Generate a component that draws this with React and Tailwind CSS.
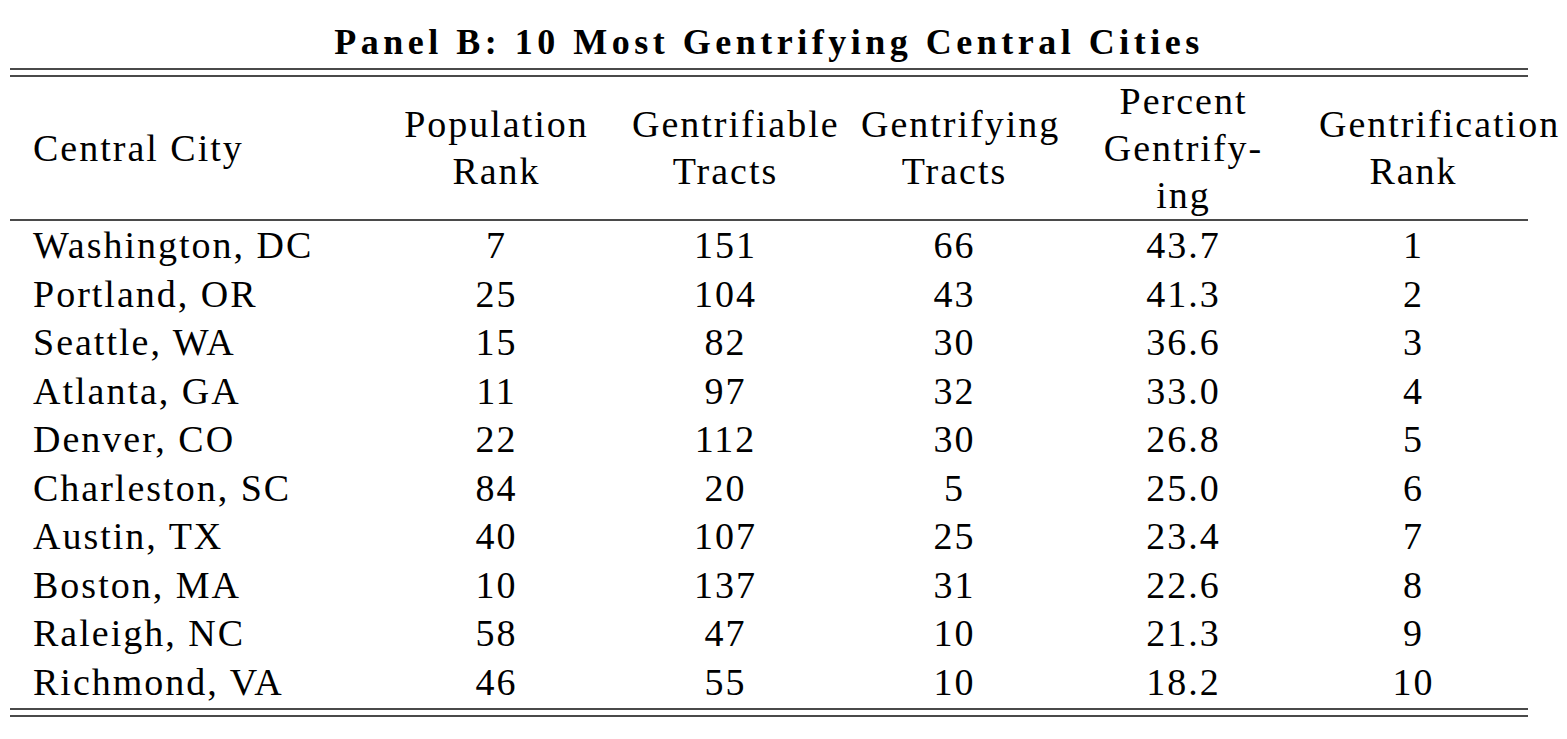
import React from 'react';

// Panel B table: most gentrifying central cities
const rows = [
  ['Washington, DC', '7', '151', '66', '43.7', '1'],
  ['Portland, OR', '25', '104', '43', '41.3', '2'],
  ['Seattle, WA', '15', '82', '30', '36.6', '3'],
  ['Atlanta, GA', '11', '97', '32', '33.0', '4'],
  ['Denver, CO', '22', '112', '30', '26.8', '5'],
  ['Charleston, SC', '84', '20', '5', '25.0', '6'],
  ['Austin, TX', '40', '107', '25', '23.4', '7'],
  ['Boston, MA', '10', '137', '31', '22.6', '8'],
  ['Raleigh, NC', '58', '47', '10', '21.3', '9'],
  ['Richmond, VA', '46', '55', '10', '18.2', '10'],
];

// each header is a list of lines; "left" marks words too long for the column
const headers = [
  [{ t: 'Population' }, { t: 'Rank' }],
  [{ t: 'Gentrifiable', left: true }, { t: 'Tracts' }],
  [{ t: 'Gentrifying', left: true }, { t: 'Tracts' }],
  [{ t: 'Percent' }, { t: 'Gentrify-' }, { t: 'ing' }],
  [{ t: 'Gentrification', left: true }, { t: 'Rank' }],
];

const cols = 'grid grid-cols-[372px_229px_229px_229px_229px_230px]';
const serif = "font-['Liberation_Serif'] text-[38px] tracking-[2px] text-black";

function Rule() {
  return <div className="h-[2px] bg-[#4a4a4a]" />;
}

export default function App() {
  return (
    <div className="w-[1567px] h-[739px] bg-white overflow-hidden">
      <div className="ml-[10px] w-[1518px]">
        {/* Title */}
        <div className="pt-[22px] h-[68px] text-center font-['Liberation_Serif'] text-[36px] leading-[40px] font-bold tracking-[4.5px] text-black">
          Panel B: 10 Most Gentrifying Central Cities
        </div>

        {/* top double rule */}
        <Rule />
        <div className="h-[5px]" />
        <Rule />

        {/* Header */}
        <div className={`${cols} h-[142px] items-center`}>
          <div className={`${serif} pl-[23px] whitespace-nowrap leading-[47px]`}>Central City</div>
          {headers.map((lines, i) => (
            <div
              key={i}
              className={i === 4 ? 'pl-[21px] pr-[20px]' : 'px-[21px]'}
            >
              {lines.map((l, j) => (
                <div
                  key={j}
                  className={
                    l.left
                      ? `${serif} leading-[47px] text-left whitespace-nowrap`
                      : `${serif} leading-[47px] text-center whitespace-nowrap`
                  }
                >
                  {l.t}
                </div>
              ))}
            </div>
          ))}
        </div>

        {/* mid rule */}
        <Rule />

        {/* Body */}
        <div>
          {rows.map((r, i) => (
            <div key={i} className={`${cols} h-[48.5px] items-center`}>
              <div className={`${serif} leading-[48.5px] pl-[23px] whitespace-nowrap`}>{r[0]}</div>
              {r.slice(1).map((v, j) => (
                <div
                  key={j}
                  className={
                    j === 4
                      ? `${serif} leading-[48.5px] pl-[21px] pr-[20px] text-center`
                      : `${serif} leading-[48.5px] px-[21px] text-center`
                  }
                >
                  {v}
                </div>
              ))}
            </div>
          ))}
        </div>

        {/* bottom double rule */}
        <div className="h-[2px]" />
        <Rule />
        <div className="h-[5px]" />
        <Rule />
      </div>
    </div>
  );
}
